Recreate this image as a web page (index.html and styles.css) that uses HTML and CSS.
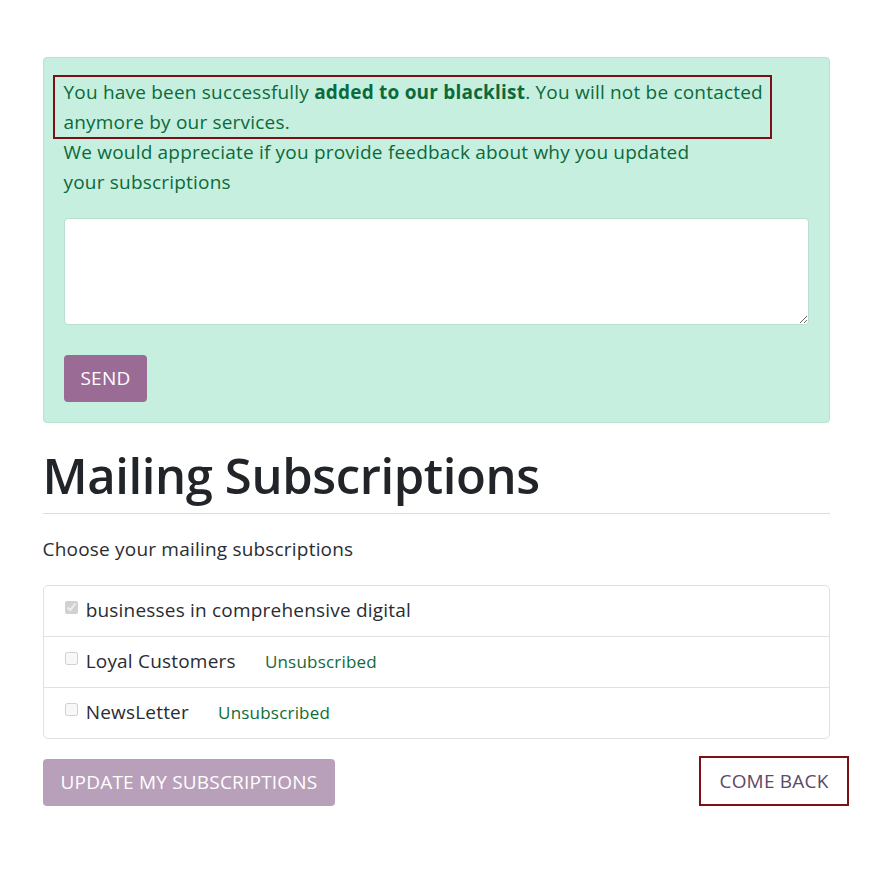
FILE: index.html
```html
<!DOCTYPE html>
<html lang="en">
<head>
<meta charset="utf-8">
<title>Mailing Subscriptions</title>
<link rel="stylesheet" href="styles.css">
</head>
<body>
<main class="page">
  <section class="alert">
    <div class="alert-text">
      <p class="highlight">You have been successfully <strong>added to our blacklist</strong>. You will not be contacted anymore by our services.</p>
      <p class="ask">We would appreciate if you provide feedback about why you updated your subscriptions</p>
    </div>
    <textarea class="feedback"></textarea>
    <button class="btn btn-send" type="button">SEND</button>
  </section>

  <h1 class="title">Mailing Subscriptions</h1>
  <hr class="rule">
  <p class="lead">Choose your mailing subscriptions</p>

  <ul class="list">
    <li class="item"><input type="checkbox" checked disabled> businesses in comprehensive digital</li>
    <li class="item"><input type="checkbox" disabled> Loyal Customers <span class="status">Unsubscribed</span></li>
    <li class="item"><input type="checkbox" disabled> NewsLetter <span class="status">Unsubscribed</span></li>
  </ul>

  <div class="actions">
    <button class="btn btn-update" type="button">UPDATE MY SUBSCRIPTIONS</button>
    <button class="btn btn-back" type="button">COME BACK</button>
  </div>
</main>
</body>
</html>
```

FILE: styles.css
```css
html, body {
  margin: 0;
  padding: 0;
  background: #ffffff;
}
body {
  font-family: "Open Sans", "Noto Sans", sans-serif;
  font-size: 19px;
  letter-spacing: 0.2px;
  line-height: 27px;
  color: #2a2c33;
}
.page {
  width: 787px;
  margin: 57px auto 0;
}
.alert {
  background: #c6efdf;
  border: 1px solid #b3e5d1;
  border-radius: 4px;
  padding: 19px 20px 20px;
  color: #0b6a3b;
}
.alert-text {
  width: 700px;
}
.alert-text p {
  margin: 0;
  line-height: 30px;
}
.highlight {
  border: 2px solid #7b1114;
  margin: -2px -8px -2px -11px !important;
  padding: 0 6px 0 9px;
}
.alert-text .ask {
  width: 650px;
}
.alert-text strong {
  font-weight: 700;
}
.feedback {
  display: block;
  box-sizing: border-box;
  width: 745px;
  height: 107px;
  margin: 21px 0 0;
  border: 1px solid #b9ddd0;
  border-radius: 4px;
  background: #ffffff;
  font: inherit;
}
.btn {
  font-family: inherit;
  font-size: 19px;
  letter-spacing: 0.2px;
  line-height: 27px;
  border: none;
  border-radius: 4px;
  cursor: pointer;
}
.btn-send {
  display: block;
  margin-top: 30px;
  height: 47px;
  padding: 0 17px;
  background: #9a6b95;
  color: #ffffff;
}
.title {
  margin: 22px 0 0;
  font-size: 49px;
  line-height: 60px;
  font-weight: 600;
  letter-spacing: -0.4px;
  color: #212529;
}
.rule {
  margin: 8px 0 0;
  border: 0;
  border-top: 1px solid #dcdcdc;
}
.lead {
  margin: 22px 0 0;
}
.list {
  list-style: none;
  margin: 22px 0 0;
  padding: 0;
  border: 1px solid #dee2e6;
  border-radius: 5px;
}
.item {
  padding: 11px 17px 12px;
  border-top: 1px solid #dee2e6;
}
.item:first-child {
  border-top: none;
}
.item input {
  margin: 3px 3px 3px 4px;
  vertical-align: 3px;
}
.status {
  margin-left: 24px;
  font-size: 17px;
  color: #0f6b3a;
}
.actions {
  display: flex;
  justify-content: space-between;
  align-items: flex-end;
  margin-top: 17px;
}
.btn-update {
  height: 47px;
  padding: 0 18px;
  background: #b9a0ba;
  color: #ffffff;
}
.btn-back {
  height: 50px;
  margin-right: -19px;
  padding: 0 18px;
  background: #ffffff;
  border: 2px solid #7b1114;
  border-radius: 0;
  color: #5b4a69;
}
```
